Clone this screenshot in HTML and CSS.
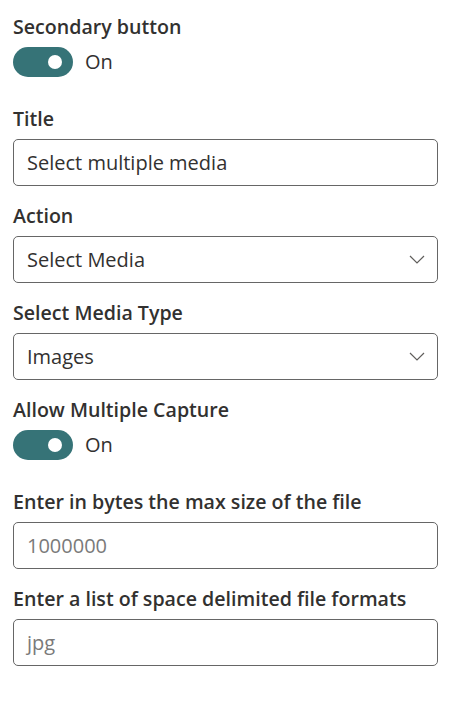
FILE: index.html
```html
<!DOCTYPE html>
<html lang="en">
<head>
<meta charset="utf-8">
<title>Properties</title>
<link rel="stylesheet" href="styles.css">
</head>
<body>
<div class="panel">
  <div class="field">
    <div class="label">Secondary button</div>
    <div class="toggle-row">
      <span class="toggle"><span class="thumb"></span></span>
      <span class="toggle-text">On</span>
    </div>
  </div>
  <div class="field">
    <div class="label">Title</div>
    <div class="box"><span class="value">Select multiple media</span></div>
  </div>
  <div class="field">
    <div class="label">Action</div>
    <div class="box dropdown"><span class="value">Select Media</span>
      <svg class="chev" width="16" height="9" viewBox="0 0 16 9"><path d="M1 1 L8 8 L15 1" fill="none" stroke="#605e5c" stroke-width="1.2"/></svg>
    </div>
  </div>
  <div class="field">
    <div class="label">Select Media Type</div>
    <div class="box dropdown"><span class="value">Images</span>
      <svg class="chev" width="16" height="9" viewBox="0 0 16 9"><path d="M1 1 L8 8 L15 1" fill="none" stroke="#605e5c" stroke-width="1.2"/></svg>
    </div>
  </div>
  <div class="field">
    <div class="label">Allow Multiple Capture</div>
    <div class="toggle-row">
      <span class="toggle"><span class="thumb"></span></span>
      <span class="toggle-text">On</span>
    </div>
  </div>
  <div class="field">
    <div class="label">Enter in bytes the max size of the file</div>
    <div class="box"><span class="placeholder">1000000</span></div>
  </div>
  <div class="field">
    <div class="label">Enter a list of space delimited file formats</div>
    <div class="box"><span class="placeholder">jpg</span></div>
  </div>
</div>
</body>
</html>
```
FILE: styles.css
```css
html, body {
  margin: 0;
  padding: 0;
  background: #ffffff;
}
body {
  font-family: "Open Sans", "Noto Sans", sans-serif;
  color: #323130;
}
.panel {
  width: 425px;
  padding: 5px 0 0 13px;
  display: flex;
  flex-direction: column;
}
.field {
  display: flex;
  flex-direction: column;
  margin-bottom: 8px;
}
.label {
  font-size: 19.6px;
  font-weight: 600;
  line-height: 28px;
  padding: 8px 0 6px;
  color: #323130;
}
.toggle-row {
  display: flex;
  align-items: center;
  height: 30px;
  margin-bottom: 12px;
}
.toggle {
  width: 60px;
  height: 30px;
  border-radius: 15px;
  background: #367377;
  display: flex;
  align-items: center;
  justify-content: flex-end;
  padding-right: 11px;
  box-sizing: border-box;
}
.thumb {
  width: 14px;
  height: 14px;
  border-radius: 50%;
  background: #ffffff;
}
.toggle-text {
  font-size: 20px;
  margin-left: 12px;
  line-height: 28px;
}
.box {
  height: 47px;
  box-sizing: border-box;
  border: 1px solid #666666;
  border-radius: 5px;
  display: flex;
  align-items: center;
  padding: 0 13px;
  font-size: 20px;
}
.value { color: #323130; }
.placeholder { color: #7a7a7a; }
.dropdown {
  justify-content: space-between;
}
.chev {
  display: block;
  margin-right: -1px;
}
```
